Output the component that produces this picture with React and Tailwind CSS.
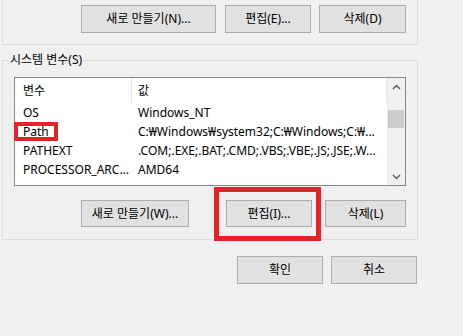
import React from "react";

function Btn({ className = "", children }) {
  return (
    <div
      className={
        "h-[27px] flex items-center justify-center bg-[#e1e1e1] border border-[#adadad] text-[12px] text-black whitespace-nowrap " +
        className
      }
    >
      {children}
    </div>
  );
}

const rows = [
  ["OS", "Windows_NT"],
  ["Path", "C:₩Windows₩system32;C:₩Windows;C:₩..."],
  ["PATHEXT", ".COM;.EXE;.BAT;.CMD;.VBS;.VBE;.JS;.JSE;.W..."],
  ["PROCESSOR_ARC...", "AMD64"],
];

export default function App() {
  return (
    <div className="relative w-[463px] h-[336px] bg-[#f0f0f0] overflow-hidden text-[12px] text-black font-['Noto_Sans','Noto_Sans_CJK_KR',sans-serif]">
      {/* top group (user variables, cut off) */}
      <div className="ml-[2px] w-[416px] h-[45px] border-x border-b border-[#dcdcdc] flex justify-end pt-[5px] pr-[11px]">
        <Btn className="w-[135px] h-[28px]">새로 만들기(N)...</Btn>
        <Btn className="w-[86px] h-[28px] ml-[9px]">편집(E)...</Btn>
        <Btn className="w-[87px] h-[28px] ml-[8px]">삭제(D)</Btn>
      </div>

      {/* system variables group */}
      <fieldset className="mt-[7px] ml-[2px] w-[416px] border border-[#dcdcdc] px-0 pb-[12px]">
        <legend className="ml-[6px] px-[1px] leading-[16px] text-[12px]">시스템 변수(S)</legend>
        <div className="px-[11px]">
          <div className="mt-[9px] w-[392px] h-[109px] border border-[#828790] bg-white flex overflow-hidden">
            <div className="w-[372px] flex flex-col overflow-hidden">
              <div className="h-[25px] shrink-0 flex">
                <div className="w-[117px] shrink-0 pl-[8px] flex items-center border-r border-[#e5e5e5]">변수</div>
                <div className="flex-1 pl-[6px] flex items-center border-r border-[#e5e5e5]">값</div>
              </div>
              {rows.map(([k, v]) => (
                <div key={k} className="h-[19px] shrink-0 flex items-center">
                  <div className="w-[117px] shrink-0 pl-[8px] whitespace-nowrap overflow-hidden">{k}</div>
                  <div className="flex-1 pl-[6px] whitespace-nowrap overflow-hidden">{v}</div>
                </div>
              ))}
            </div>
            <div className="w-[18px] shrink-0 bg-[#f0f0f0] flex flex-col">
              <div className="h-[17px] flex items-center justify-center">
                <svg width="9" height="6" viewBox="0 0 9 6">
                  <path d="M1 5 L4.5 1.5 L8 5" fill="none" stroke="#606060" strokeWidth="1.5" />
                </svg>
              </div>
              <div className="h-[15px]" />
              <div className="h-[18px] mx-[1px] bg-[#cdcdcd]" />
              <div className="flex-1" />
              <div className="h-[17px] flex items-center justify-center">
                <svg width="9" height="6" viewBox="0 0 9 6">
                  <path d="M1 1 L4.5 4.5 L8 1" fill="none" stroke="#606060" strokeWidth="1.5" />
                </svg>
              </div>
            </div>
          </div>
          <div className="mt-[14px] flex">
            <Btn className="w-[108px] ml-[67px]">새로 만들기(W)...</Btn>
            <Btn className="w-[86px] ml-[37px]">편집(I)...</Btn>
            <Btn className="w-[81px] ml-[13px]">삭제(L)</Btn>
          </div>
        </div>
      </fieldset>

      {/* OK / Cancel */}
      <div className="mt-[16px] flex pl-[237px]">
        <Btn className="w-[86px] h-[28px]">확인</Btn>
        <Btn className="w-[86px] h-[28px] ml-[8px]">취소</Btn>
      </div>

      {/* red annotation boxes */}
      <div className="absolute left-[14px] top-[122px] w-[44px] h-[19px] border-[4px] border-[#e8202a]" />
      <div className="absolute left-[214px] top-[187px] w-[107px] h-[54px] border-[5px] border-[#e8202a]" />
    </div>
  );
}
